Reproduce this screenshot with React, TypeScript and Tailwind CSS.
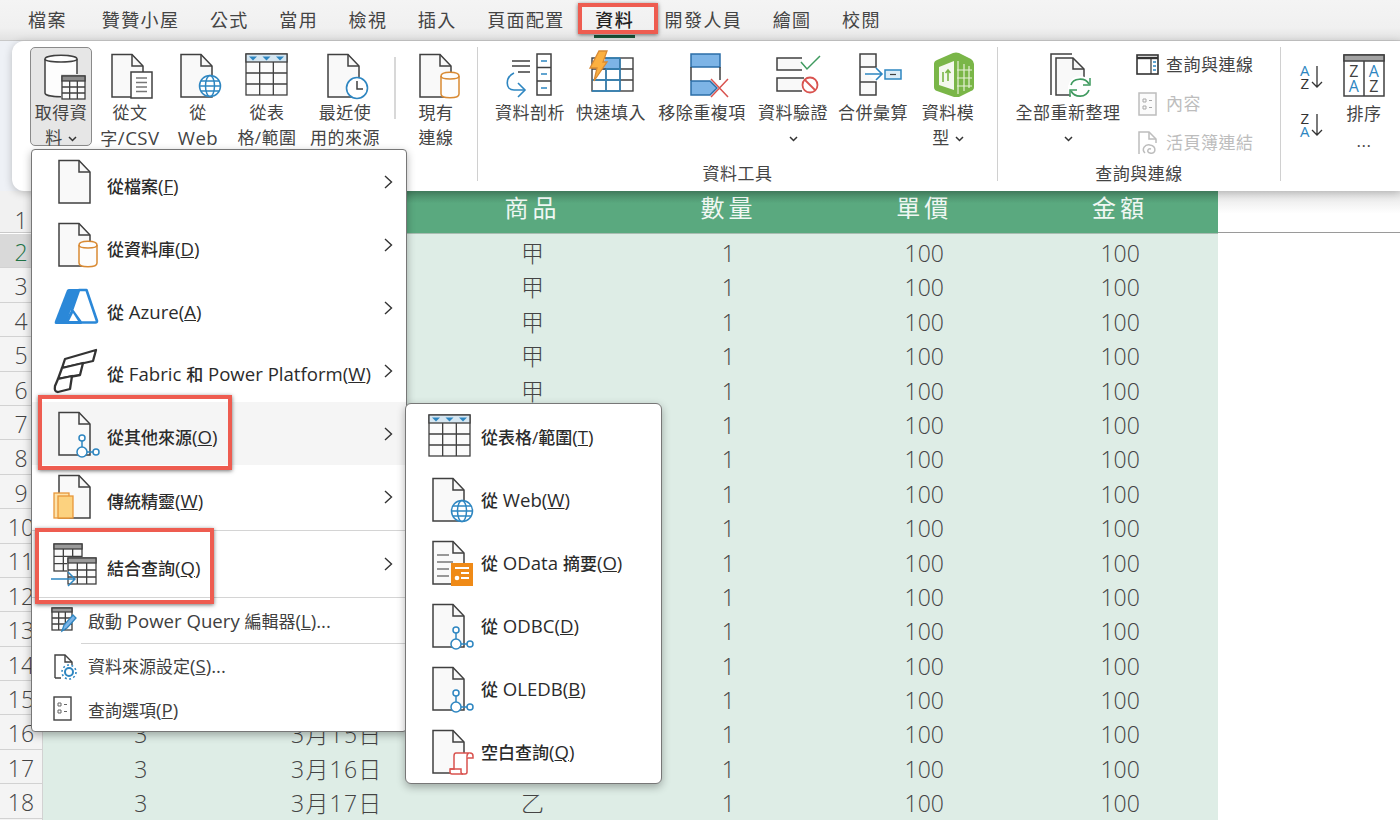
import type { ReactNode } from "react"

const ink = "#404040"
const blue = "#2e86c1"
const orange = "#d98a33"

function Box({ children, w = 48, h = 46 }: { children: ReactNode; w?: number; h?: number }) {
  return (
    <svg width={w} height={h} viewBox={`0 0 ${w} ${h}`} className="shrink-0 overflow-visible" fill="none">
      {children}
    </svg>
  )
}

function Doc({ x = 7 }: { x?: number }) {
  return (
    <>
      <path d={`M${x} 1.5H${x + 20}L${x + 31} 13V44H${x}Z`} fill="#f9f9f9" stroke={ink} strokeWidth="1.5" />
      <path d={`M${x + 20} 1.5V13H${x + 31}`} stroke={ink} strokeWidth="1.5" />
    </>
  )
}

function Cylinder({ x, y, w, h, color }: { x: number; y: number; w: number; h: number; color: string }) {
  return (
    <>
      <path
        d={`M${x} ${y + 4}C${x} ${y - 1} ${x + w} ${y - 1} ${x + w} ${y + 4}V${y + h - 4}C${x + w} ${y + h + 1} ${x} ${y + h + 1} ${x} ${y + h - 4}Z`}
        fill="#fdfdfd"
        stroke={color}
        strokeWidth="1.5"
      />
      <path d={`M${x} ${y + 4}C${x} ${y + 8} ${x + w} ${y + 8} ${x + w} ${y + 4}`} stroke={color} strokeWidth="1.5" />
    </>
  )
}

function Globe({ cx, cy }: { cx: number; cy: number }) {
  return (
    <g stroke={blue} strokeWidth="1.5">
      <circle cx={cx} cy={cy} r="10.5" fill="#fff" />
      <ellipse cx={cx} cy={cy} rx="4.5" ry="10.5" />
      <path d={`M${cx - 10.5} ${cy}H${cx + 10.5}M${cx - 9} ${cy - 5}H${cx + 9}M${cx - 9} ${cy + 5}H${cx + 9}`} />
    </g>
  )
}

function Nodes({ x }: { x: number }) {
  return (
    <g stroke={blue} strokeWidth="1.5" fill="#fff">
      <path d={`M${x} 30V36M${x + 5} 41H${x + 11}`} />
      <circle cx={x} cy="27" r="3" />
      <circle cx={x} cy="41" r="5" />
      <circle cx={x + 14} cy="41" r="3" />
    </g>
  )
}

function GridTable({ x, y, w, h, headFill }: { x: number; y: number; w: number; h: number; headFill: string }) {
  const head = Math.round(h * 0.2)
  const c = w / 3
  const r = (h - head) / 3
  return (
    <g stroke={ink} strokeWidth="1.3">
      <rect x={x} y={y} width={w} height={h} fill="#fbfbfb" />
      <rect x={x} y={y} width={w} height={head} fill={headFill} />
      <path d={`M${x + c} ${y + head}V${y + h}M${x + 2 * c} ${y + head}V${y + h}M${x} ${y + head + r}H${x + w}M${x} ${y + head + 2 * r}H${x + w}`} />
    </g>
  )
}

function TableRange({ x = 2 }: { x?: number }) {
  const w = 41
  return (
    <>
      <GridTable x={x} y={1} w={w} h={41} headFill="#d5e6f1" />
      {[7, 20.5, 34].map((d) => (
        <path key={d} d={`M${x + d - 4} 3.5H${x + d + 4}L${x + d} 7.5Z`} fill={blue} />
      ))}
    </>
  )
}

const icons: Record<string, ReactNode> = {
  getData: (
    <Box>
      <Cylinder x={8} y={1} w={32} h={42} color={ink} />
      <rect x={24} y={20} width={26} height={26} fill="#e6e6e6" />
      <GridTable x={25} y={22} w={23} h={23} headFill="#8c8c8c" />
    </Box>
  ),
  text: (
    <Box>
      <Doc x={6} />
      <rect x={25} y={19} width={21} height={26} fill="#fff" stroke={ink} strokeWidth="1.5" />
      <path d="M30 25H41M30 29.5H41M30 34H41M30 38.5H41" stroke="#777" strokeWidth="1.3" />
    </Box>
  ),
  web: (
    <Box>
      <Doc x={7} />
      <Globe cx={36} cy={33} />
    </Box>
  ),
  table: (
    <Box>
      <TableRange x={3} />
    </Box>
  ),
  recent: (
    <Box>
      <Doc x={7} />
      <circle cx={36} cy={35} r="10.5" fill="#fff" stroke={blue} strokeWidth="1.6" />
      <path d="M36 28V36H42" stroke={ink} strokeWidth="1.5" />
    </Box>
  ),
  existing: (
    <Box>
      <Doc x={8} />
      <Cylinder x={29} y={19} w={18} h={26} color={orange} />
    </Box>
  ),
  profile: (
    <Box>
      <path d="M6 8H24M6 13H24M12 19H24" stroke={ink} strokeWidth="1.5" />
      <rect x={31} y={1} width={14} height={41} fill="#fff" stroke={ink} strokeWidth="1.5" />
      <path d="M31 14.5H45M31 28H45" stroke={ink} strokeWidth="1.5" />
      <path d="M35 8H41M35 21H41M35 35H41" stroke={blue} strokeWidth="1.5" />
      <path d="M8 20C-1 24 -1 37 8 37H19" stroke={blue} strokeWidth="1.6" />
      <path d="M12 30L19 37L12 44" stroke={blue} strokeWidth="1.6" />
    </Box>
  ),
  flash: (
    <Box>
      <path d="M19 5H33V17H11Z" fill="#7db4e6" />
      <rect x={5} y={5} width={41} height={33} stroke={ink} strokeWidth="1.4" fill="none" />
      <path d="M33 5V38M19 16V38M46 16H5M46 27H5" stroke={ink} strokeWidth="1.3" />
      <path d="M19 5H33M19 16H33M33 5V38M19 16V38M5 27H33M5 38H33" stroke={blue} strokeWidth="1.4" />
      <path d="M12 -2H20L16 9H20L7 28L10 15H3Z" fill="#fbb040" stroke={orange} strokeWidth="1.3" />
    </Box>
  ),
  dupes: (
    <Box>
      <rect x={13} y={1} width={29} height={13} fill="#7db4e6" stroke="#2b6ea8" strokeWidth="1.5" />
      <path d="M13 14V28M42 14V27" stroke={ink} strokeWidth="1.5" />
      <path d="M13 28H32L39 35L32 42H13Z" fill="#7db4e6" stroke="#2b6ea8" strokeWidth="1.5" />
      <path d="M33 26L50 44M50 26L33 44" stroke="#d9534f" strokeWidth="1.5" />
    </Box>
  ),
  validate: (
    <Box>
      <path d="M33 5H8V17H33" fill="#f9f9f9" stroke={ink} strokeWidth="1.5" />
      <path d="M35 25H8V38H33" fill="#f9f9f9" stroke={ink} strokeWidth="1.5" />
      <path d="M32 9L38 16L51 3" stroke="#3f9a5f" strokeWidth="1.5" />
      <circle cx={41} cy={32} r="7.5" fill="#fff" stroke="#d9534f" strokeWidth="1.8" />
      <path d="M36 27L46 37" stroke="#d9534f" strokeWidth="1.8" />
    </Box>
  ),
  consolidate: (
    <Box>
      <path d="M11 1H27V14H11ZM11 14V29H27M11 29H27V42H11Z" fill="#f9f9f9" stroke={ink} strokeWidth="1.5" />
      <path d="M16 21H33M27 15L33 21L27 27" stroke={blue} strokeWidth="1.6" />
      <rect x={36} y={17} width={16} height={9} fill="#dcecf7" stroke={blue} strokeWidth="1.5" />
      <path d="M41 21.5H47" stroke={ink} strokeWidth="1.2" />
    </Box>
  ),
  model: (
    <Box>
      <path d="M10 11Q10 8 13 7L29 0Q32 -1 35 0L47 6Q50 8 50 11V34Q50 37 47 38L35 44H30L13 38Q10 37 10 34Z" fill="#7ab648" />
      <path d="M15 14L30 8V37L15 32Z" fill="#f4f8ee" />
      <path d="M19 19V29M24 28V18M21.5 20L24 17L26.5 20" stroke="#7ab648" strokeWidth="1.6" />
      <path d="M34 8V41M40 11V38M45 13V35M33 17L48 17M33 25H48M33 33H48" stroke="#e6f1d6" strokeWidth="1.2" />
    </Box>
  ),
  refresh: (
    <Box>
      <path d="M7 42V1H28" stroke={ink} strokeWidth="1.5" />
      <path d="M12 5H29L40 16V42H12Z" fill="#f9f9f9" stroke={ink} strokeWidth="1.5" />
      <path d="M29 5V16H40" stroke={ink} strokeWidth="1.5" />
      <circle cx={36} cy={35} r="12" fill="#fff" />
      <path d="M27 32C29 25 41 24 45 31M45 37C42 45 31 45 27 38" stroke="#3f9a5f" strokeWidth="1.7" />
      <path d="M46 25V32H39M26 44V37H33" stroke="#3f9a5f" strokeWidth="1.5" />
    </Box>
  ),
  sortPanel: (
    <Box w={42} h={44}>
      <rect x={1} y={1} width={40} height={41} fill="#fff" stroke={ink} strokeWidth="1.5" />
      <rect x={1} y={1} width={40} height={6} fill="#a3a3a3" stroke={ink} strokeWidth="1.5" />
      <path d="M21 7V42" stroke={ink} strokeWidth="1.5" />
      <text x={11} y={23} textAnchor="middle" fontSize="16" fill="#404040">Z</text>
      <text x={11} y={38} textAnchor="middle" fontSize="16" fill={blue}>A</text>
      <text x={31} y={23} textAnchor="middle" fontSize="16" fill={blue}>A</text>
      <text x={31} y={38} textAnchor="middle" fontSize="16" fill="#404040">Z</text>
    </Box>
  ),
  connPane: (
    <Box w={24} h={22}>
      <rect x={1} y={1} width={21} height={19} fill="#fff" stroke="#333" strokeWidth="1.6" />
      <path d="M1 4H22" stroke="#333" strokeWidth="2.4" />
      <path d="M15 4V20" stroke="#333" strokeWidth="1.2" />
      <path d="M17 8H20M17 12H20M17 16H20" stroke={blue} strokeWidth="1.6" />
    </Box>
  ),
  props: (
    <Box w={24} h={24}>
      <rect x={3} y={1} width={17} height={22} fill="#fbfbfb" stroke="#bdbdbd" strokeWidth="1.5" />
      <path d="M7 7H10V10H7ZM7 14H10V17H7ZM13 8.5H16M13 15.5H16" stroke="#a8a8a8" />
    </Box>
  ),
  wbLinks: (
    <Box w={24} h={24}>
      <path d="M3 23V1H13L20 8V12" stroke="#bdbdbd" strokeWidth="1.5" />
      <path d="M13 1V8H20" stroke="#bdbdbd" strokeWidth="1.5" />
      <path d="M9 22C5 18 9 13 14 14C21 15 20 24 14 22C10 21 12 17 15 18" stroke="#bdbdbd" strokeWidth="1.5" />
    </Box>
  ),
  azure: (
    <Box>
      <path d="M27 5H34.5L45 36Q45 37.5 43.5 37.5H29L20 25Z" fill="#fff" stroke="#2b88d8" strokeWidth="2.6" strokeLinejoin="round" />
      <path d="M15 5Q16 4 17 4H28L13 39H4Q2 39 3 36Z" fill="#2b88d8" />
      <path d="M20 24L30 39H11Z" fill="#2b88d8" />
      <path d="M21 28L26 36H17Z" fill="#fff" />
    </Box>
  ),
  fabric: (
    <Box>
      <g stroke="#333" strokeWidth="2.3" strokeLinejoin="round" fill="#fff">
        <path d="M13 11L44 2L41 13L10 20Z" />
        <path d="M10 20L31 15L28 27L6 31Z" />
        <path d="M6 31L20 28L18 41L6 44Q2 44 3 38Z" />
      </g>
    </Box>
  ),
  wizard: (
    <Box>
      <Doc x={7} />
      <rect x={2} y={19} width={15} height={25} fill="#fde3ab" stroke="#e8973a" strokeWidth="1.3" />
      <rect x={6} y={22} width={15} height={22} fill="#fcd27f" stroke="#e8973a" strokeWidth="1.3" />
    </Box>
  ),
  combine: (
    <Box>
      <GridTable x={2} y={3} w={28} h={27} headFill="#9a9a9a" />
      <rect x={15} y={16} width={30} height={28} fill="#fff" />
      <GridTable x={16} y={17} w={28} h={26} headFill="#9a9a9a" />
      <path d="M-1 38H23M16 31L23 38L16 45" stroke={blue} strokeWidth="1.5" />
    </Box>
  ),
  odata: (
    <Box>
      <Doc x={4} />
      <path d="M8 15H20M8 22H24M8 29H20M8 36H20" stroke="#777" strokeWidth="1.4" />
      <rect x={22} y={23} width={22} height={23} fill="#ef8a17" />
      <path d="M26 28H40M32 33H40M32 38H40" stroke="#fff" strokeWidth="2.2" />
      <circle cx={28} cy={38} r="2.3" fill="#fff" />
    </Box>
  ),
  script: (
    <Box>
      <Doc x={4} />
      <g stroke="#d9534f" strokeWidth="1.5" fill="#fff">
        <path d="M27 24H41Q38 24 38 27V43Q38 45 36 45H23Q21 45 21 43V40H25V27Q25 24 27 24Z" />
        <path d="M41 24Q44 24 44 27V29H38" />
        <path d="M21 40H32V43Q32 45 34 45" fill="none" />
      </g>
    </Box>
  ),
  editor: (
    <Box w={28} h={28}>
      <GridTable x={4} y={2} w={20} h={22} headFill="#9a9a9a" />
      <path d="M14 25L16 19L25 9L28 12L19 22Z" fill="#7db4e6" stroke={blue} strokeWidth="1.3" />
    </Box>
  ),
  sourceSet: (
    <Box w={28} h={28}>
      <path d="M7 26V3H17L24 10V13" fill="#fff" stroke={ink} strokeWidth="1.4" />
      <path d="M17 3V10H24" stroke={ink} strokeWidth="1.4" />
      <path d="M7 26H13" stroke={ink} strokeWidth="1.4" />
      <circle cx={21} cy={20} r="4" stroke={blue} strokeWidth="2" fill="#fff" />
      <circle cx={21} cy={20} r="7" stroke={blue} strokeWidth="1.6" strokeDasharray="2 2.4" />
    </Box>
  ),
  options: (
    <Box w={28} h={28}>
      <rect x={6} y={2} width={17} height={23} fill="#fff" stroke={ink} strokeWidth="1.4" />
      <path d="M10 8H13V11H10ZM10 15H13V18H10ZM16 9.5H19M16 16.5H19" stroke="#666" />
    </Box>
  ),
}

// Latin runs in the menus are set larger than the CJK around them
function L({ children }: { children: ReactNode }) {
  return <span className="text-[18.6px]">{children}</span>
}

function Chevron({ className = "" }: { className?: string }) {
  return (
    <svg width="9" height="6" viewBox="0 0 9 6" fill="none" className={`inline-block ${className}`}>
      <path d="M1 1L4.5 4.5L8 1" stroke="#333" strokeWidth="1.5" />
    </svg>
  )
}

function RibbonButton({
  icon,
  w,
  children,
  active,
}: {
  icon: string
  w: number
  children: ReactNode
  active?: boolean
}) {
  return (
    <div
      style={{ width: w }}
      className={`flex h-[99px] shrink-0 flex-col items-center pt-[6px] text-center text-[17px] leading-[24.5px] tracking-[0.5px] whitespace-nowrap text-[#444] ${
        active ? "rounded-[5px] border border-[#8a8a8a] bg-[#e6e6e6]" : ""
      }`}
    >
      {icons[icon]}
      <div className={active ? "mt-[1px]" : "mt-[2px]"}>{children}</div>
    </div>
  )
}

function Group({ label, width, children }: { label?: string; width: number; children: ReactNode }) {
  return (
    <div style={{ width }} className="flex h-[134px] shrink-0 flex-col border-r border-[#d0d0d0]">
      <div className="flex h-[117px] shrink-0 items-start">{children}</div>
      <div className="text-center text-[17px] leading-[20px] tracking-[0.5px] text-[#444]">{label}</div>
    </div>
  )
}

function SmallAction({ icon, label, off }: { icon: string; label: string; off?: boolean }) {
  return (
    <div className={`flex h-[39px] items-center gap-[6px] text-[17px] tracking-[0.5px] ${off ? "text-[#bdbdbd]" : "text-[#444]"}`}>
      <div className="flex w-[24px] justify-center">{icons[icon]}</div>
      <span>{label}</span>
    </div>
  )
}

function RowArrow() {
  return (
    <svg width="10" height="16" viewBox="0 0 10 16" fill="none" className="ml-auto shrink-0">
      <path d="M2 2L8.5 8L2 14" stroke="#333" strokeWidth="1.4" />
    </svg>
  )
}

function MenuRow({
  icon,
  h,
  hover,
  children,
}: {
  icon: ReactNode
  h: number
  hover?: boolean
  children: ReactNode
}) {
  return (
    <div style={{ height: h }} className={`flex items-center pr-[13px] pl-[20px] ${hover ? "bg-[#f5f5f5]" : ""}`}>
      {icon}
      <span className="mt-[7px] ml-[7px] text-[17px] font-medium whitespace-nowrap text-[#2b2b2b]">{children}</span>
      <RowArrow />
    </div>
  )
}

function SmallRow({ icon, h, children }: { icon: string; h: number; children: ReactNode }) {
  return (
    <div style={{ height: h }} className="flex items-center pl-[16px]">
      {icons[icon]}
      <span className="ml-[12px] text-[17px] whitespace-nowrap text-[#404040]">{children}</span>
    </div>
  )
}

function SubRow({ icon, children }: { icon: ReactNode; children: ReactNode }) {
  return (
    <div className="flex h-[63px] items-center pl-[23px]">
      {icon}
      <span className="mt-[1px] ml-[4px] text-[17px] font-medium whitespace-nowrap text-[#2b2b2b]">{children}</span>
    </div>
  )
}

const tabs = ["贊贊小屋", "公式", "當用", "檢視", "插入", "頁面配置", "資料", "開發人員", "繪圖", "校閱"]
const rowNums = Array.from({ length: 17 }, (_, i) => i + 2)
const cols = ["商品", "數量", "單價", "金額"]

function Sheet() {
  return (
    <div className="grid grid-cols-[43px_repeat(6,1fr)_182px]">
      <div className="flex h-[42px] items-center justify-center border-r border-b border-[#c9c9c9] bg-[#f1f1f1] pt-[16px] text-[23px] leading-[24px] font-light text-[#444]">1</div>
      <div className="col-span-6 grid h-[43px] grid-cols-6 border-b border-[#a9bdb2] bg-[linear-gradient(#4c8f6b,#5aa97f_30%)] text-center text-[24px] leading-[34px] tracking-[4px] text-[#f0f7f3]">
        <div />
        <div />
        {cols.map((c) => (
          <div key={c}>{c}</div>
        ))}
      </div>
      <div className="h-[42px] border-b border-[#9a9a9a] bg-[linear-gradient(#e3e3e3,#fff_55%)]" />
      {rowNums.map((n) => (
        <div key={n} className="contents">
          <div
            className={`flex h-[34.4px] items-center justify-center border-r border-b border-[#d2d2d2] pt-[3px] text-[23px] font-light ${
              n === 2 ? "bg-[#d9d9d9] text-[#217346]" : "bg-[#f4f4f4] text-[#444]"
            }`}
          >
            {n}
          </div>
          <div className="col-span-6 grid h-[34.4px] grid-cols-6 items-center bg-[#deede6] pt-[2px] text-center text-[23px] font-light text-[#444]">
            {/* cells under the open menus are covered anyway */}
            <div>{n >= 16 ? "3" : ""}</div>
            <div className="tracking-[1.2px]">{n >= 16 ? `3月${n - 1}日` : ""}</div>
            <div>{n <= 6 ? "甲" : n === 18 ? "乙" : ""}</div>
            <div>1</div>
            <div>100</div>
            <div>100</div>
          </div>
          <div />
        </div>
      ))}
      <div className="h-[10px] border-r border-[#d2d2d2] bg-[#f4f4f4]" />
      <div className="col-span-6 h-[10px] bg-[#deede6]" />
    </div>
  )
}

const redBox = "absolute border-[4px] border-[#ee5c50] shadow-[0_1px_4px_rgba(0,0,0,0.55)]"

export default function App() {
  return (
    <div className="relative h-[820px] w-[1400px] overflow-hidden bg-white font-['Open_Sans','Noto_Sans_CJK_TC',sans-serif]">
      <div className="flex h-[41px] items-center border-b border-[#c8c8c8] bg-[linear-gradient(#f4f4f4,#f0f0f0_70%,#e2e2e2)] pl-[28px] text-[18px] tracking-[1.4px] text-[#444]">
        <span className="mr-[35px]">檔案</span>
        <div className="flex gap-[30.5px]">
          {tabs.map((t) => (
            <div key={t} className={`relative ${t === "資料" ? "font-medium text-[#222]" : ""}`}>
              {t}
              {t === "資料" && <div className="absolute top-[28px] -left-[1px] h-[3px] w-[41px] bg-[#1c5a3c]" />}
            </div>
          ))}
        </div>
      </div>

      <div className="relative z-10 h-[150px] bg-[#eef1f6] pl-[12px]">
        <div className="flex h-[150px] items-start rounded-l-[12px] bg-white pt-[6px] shadow-[0_2px_8px_rgba(0,0,0,0.22)]">
          <Group width={466}>
            <div className="ml-[18px] flex">
              <RibbonButton icon="getData" w={62} active>
                取得資
                <br />
                料 <Chevron />
              </RibbonButton>
              <RibbonButton icon="text" w={76}>
                從文
                <br />
                字<L>/CSV</L>
              </RibbonButton>
              <RibbonButton icon="web" w={60}>
                從
                <br />
                <L>Web</L>
              </RibbonButton>
              <RibbonButton icon="table" w={78}>
                從表
                <br />
                格/範圍
              </RibbonButton>
              <RibbonButton icon="recent" w={78}>
                最近使
                <br />
                用的來源
              </RibbonButton>
              <div className="mt-[10px] ml-[10px] h-[62px] w-[2px] bg-[#d8d8d8]" />
              <RibbonButton icon="existing" w={80}>
                現有
                <br />
                連線
              </RibbonButton>
            </div>
          </Group>
          <Group width={520} label="資料工具">
            <div className="ml-[13px] flex">
              <RibbonButton icon="profile" w={78}>資料剖析</RibbonButton>
              <RibbonButton icon="flash" w={84}>快速填入</RibbonButton>
              <RibbonButton icon="dupes" w={98}>移除重複項</RibbonButton>
              <RibbonButton icon="validate" w={84}>
                資料驗證
                <br />
                <Chevron />
              </RibbonButton>
              <RibbonButton icon="consolidate" w={76}>合併彙算</RibbonButton>
              <RibbonButton icon="model" w={74}>
                資料模
                <br />
                型 <Chevron />
              </RibbonButton>
            </div>
          </Group>
          <Group width={283} label="查詢與連線">
            <div className="ml-[10px] flex">
              <RibbonButton icon="refresh" w={120}>
                全部重新整理
                <br />
                <Chevron />
              </RibbonButton>
              <div className="ml-[8px] -mt-[2px]">
                <SmallAction icon="connPane" label="查詢與連線" />
                <SmallAction icon="props" label="內容" off />
                <SmallAction icon="wbLinks" label="活頁簿連結" off />
              </div>
            </div>
          </Group>
          <div className="flex pl-[19px]">
            <div className="flex w-[43px] flex-col gap-[23px] pt-[17px]">
              {["AZ", "ZA"].map((s) => (
                <div key={s} className="flex items-center gap-[1px]">
                  <div className="flex flex-col text-center text-[15px] leading-[12.5px] font-medium">
                    <span className={s === "AZ" ? "text-[#2e86c1]" : "text-[#333]"}>{s[0]}</span>
                    <span className={s === "AZ" ? "text-[#333]" : "text-[#2e86c1]"}>{s[1]}</span>
                  </div>
                  <svg width="12" height="24" viewBox="0 0 12 24" fill="none">
                    <path d="M6 1V22M1 17L6 22L11 17" stroke="#333" strokeWidth="1.3" />
                  </svg>
                </div>
              ))}
            </div>
            <div className="flex w-[42px] flex-col items-center pt-[7px] text-[17px] leading-[27px] tracking-[0.5px] text-[#444]">
              {icons.sortPanel}
              <div className="mt-[2px]">排序</div>
              <div>...</div>
            </div>
          </div>
        </div>
      </div>

      <Sheet />

      <div className="absolute top-[149px] left-[31px] z-20 w-[376px] overflow-hidden rounded-[4px] border border-[#777] bg-white pt-[1px] shadow-[0_3px_8px_rgba(0,0,0,0.3)]">
        <MenuRow h={62.8} icon={<Box><Doc /></Box>}>從檔案<L>(<u>F</u>)</L></MenuRow>
        <MenuRow
          h={62.8}
          icon={
            <Box>
              <Doc />
              <Cylinder x={27} y={19} w={18} h={26} color={orange} />
            </Box>
          }
        >
          從資料庫<L>(<u>D</u>)</L>
        </MenuRow>
        <MenuRow h={62.8} icon={icons.azure}>從<L> Azure(<u>A</u>)</L></MenuRow>
        <MenuRow h={62.8} icon={icons.fabric}>從<L> Fabric </L>和<L> Power Platform(<u>W</u>)</L></MenuRow>
        <MenuRow
          h={62.8}
          hover
          icon={
            <Box>
              <Doc />
              <Nodes x={30} />
            </Box>
          }
        >
          從其他來源<L>(<u>O</u>)</L>
        </MenuRow>
        <MenuRow h={65} icon={icons.wizard}>傳統精靈<L>(<u>W</u>)</L></MenuRow>
        <div className="h-px bg-[#d4d4d4]" />
        <MenuRow h={66} icon={icons.combine}>結合查詢<L>(<u>Q</u>)</L></MenuRow>
        <div className="h-px bg-[#d4d4d4]" />
        <SmallRow h={45} icon="editor">啟動<L> Power Query </L>編輯器<L>(<u>L</u>)...</L></SmallRow>
        <div className="ml-[49px] h-px bg-[#d4d4d4]" />
        <SmallRow h={44} icon="sourceSet">資料來源設定<L>(<u>S</u>)...</L></SmallRow>
        <SmallRow h={43} icon="options">查詢選項<L>(<u>P</u>)</L></SmallRow>
      </div>

      <div className="absolute top-[403px] left-[405px] z-20 w-[257px] rounded-[6px] border border-[#777] bg-white pt-[1px] shadow-[0_3px_8px_rgba(0,0,0,0.3)]">
        <SubRow icon={<Box><TableRange x={0} /></Box>}>從表格/範圍<L>(<u>T</u>)</L></SubRow>
        <SubRow
          icon={
            <Box>
              <Doc x={4} />
              <Globe cx={33} cy={34} />
            </Box>
          }
        >
          從<L> Web(<u>W</u>)</L>
        </SubRow>
        <SubRow icon={icons.odata}>從<L> OData </L>摘要<L>(<u>O</u>)</L></SubRow>
        <SubRow
          icon={
            <Box>
              <Doc x={4} />
              <Nodes x={27} />
            </Box>
          }
        >
          從<L> ODBC(<u>D</u>)</L>
        </SubRow>
        <SubRow
          icon={
            <Box>
              <Doc x={4} />
              <Nodes x={27} />
            </Box>
          }
        >
          從<L> OLEDB(<u>B</u>)</L>
        </SubRow>
        <SubRow icon={icons.script}>空白查詢<L>(<u>Q</u>)</L></SubRow>
      </div>

      <div className={`${redBox} top-[3px] left-[578px] z-30 h-[31px] w-[80px]`} />
      <div className={`${redBox} top-[395px] left-[38px] z-30 h-[75px] w-[194px]`} />
      <div className={`${redBox} top-[528px] left-[35px] z-30 h-[76px] w-[179px]`} />
    </div>
  )
}
